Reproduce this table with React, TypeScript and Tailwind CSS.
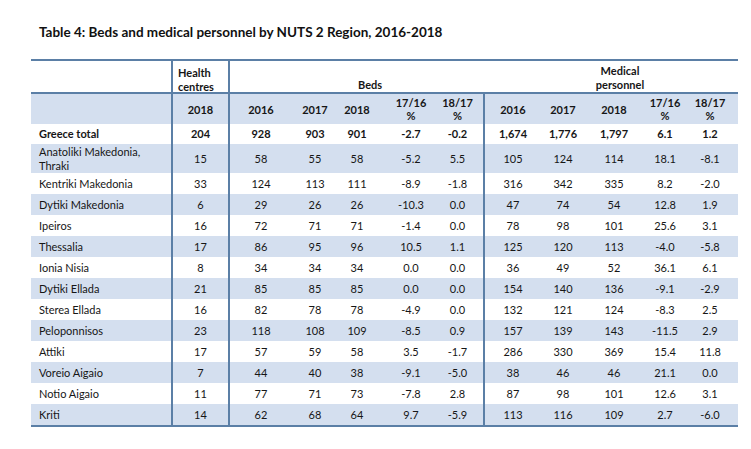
import React from "react";

const GRID =
  "grid grid-cols-[140px_57px_64px_46px_38px_70px_37px_58px_44px_58px_44px_51px]";

type Row = { name: string[]; v: string[]; bold?: boolean; h: string };

const rows: Row[] = [
  { name: ["Greece total"], v: ["204", "928", "903", "901", "-2.7", "-0.2", "1,674", "1,776", "1,797", "6.1", "1.2"], bold: true, h: "h-[20px]" },
  { name: ["Anatoliki Makedonia,", "Thraki"], v: ["15", "58", "55", "58", "-5.2", "5.5", "105", "124", "114", "18.1", "-8.1"], h: "h-[29px]" },
  { name: ["Kentriki Makedonia"], v: ["33", "124", "113", "111", "-8.9", "-1.8", "316", "342", "335", "8.2", "-2.0"], h: "h-[21px]" },
  { name: ["Dytiki Makedonia"], v: ["6", "29", "26", "26", "-10.3", "0.0", "47", "74", "54", "12.8", "1.9"], h: "h-[21px]" },
  { name: ["Ipeiros"], v: ["16", "72", "71", "71", "-1.4", "0.0", "78", "98", "101", "25.6", "3.1"], h: "h-[21px]" },
  { name: ["Thessalia"], v: ["17", "86", "95", "96", "10.5", "1.1", "125", "120", "113", "-4.0", "-5.8"], h: "h-[21px]" },
  { name: ["Ionia Nisia"], v: ["8", "34", "34", "34", "0.0", "0.0", "36", "49", "52", "36.1", "6.1"], h: "h-[21px]" },
  { name: ["Dytiki Ellada"], v: ["21", "85", "85", "85", "0.0", "0.0", "154", "140", "136", "-9.1", "-2.9"], h: "h-[21px]" },
  { name: ["Sterea Ellada"], v: ["16", "82", "78", "78", "-4.9", "0.0", "132", "121", "124", "-8.3", "2.5"], h: "h-[21px]" },
  { name: ["Peloponnisos"], v: ["23", "118", "108", "109", "-8.5", "0.9", "157", "139", "143", "-11.5", "2.9"], h: "h-[21px]" },
  { name: ["Attiki"], v: ["17", "57", "59", "58", "3.5", "-1.7", "286", "330", "369", "15.4", "11.8"], h: "h-[21px]" },
  { name: ["Voreio Aigaio"], v: ["7", "44", "40", "38", "-9.1", "-5.0", "38", "46", "46", "21.1", "0.0"], h: "h-[21px]" },
  { name: ["Notio Aigaio"], v: ["11", "77", "71", "73", "-7.8", "2.8", "87", "98", "101", "12.6", "3.1"], h: "h-[21px]" },
  { name: ["Kriti"], v: ["14", "62", "68", "64", "9.7", "-5.9", "113", "116", "109", "2.7", "-6.0"], h: "h-[21px]" },
];

// per value column extra classes (index 0 = health centres)
const colCls = [
  "border-l-2 border-[#5b7fa6]",
  "border-l-2 border-[#5b7fa6]",
  "",
  "",
  "",
  "pr-[14px]",
  "border-l-2 border-[#5b7fa6]",
  "",
  "",
  "",
  "pr-[5px]",
];

export default function App() {
  return (
    <div
      className="w-[751px] h-[449px] bg-white text-[#161616] overflow-hidden"
      style={{ fontFamily: "Lato, 'Noto Sans', sans-serif" }}
    >
      <div className="pt-[24px] pl-[39px] h-[59px] text-[13.5px] font-bold leading-[16px] text-[#111]">
        Table 4: Beds and medical personnel by NUTS 2 Region, 2016-2018
      </div>
      <div className="ml-[31px] w-[707px] border-t-2 border-b-2 border-[#5b7fa6] text-[11px]">
        {/* header row 1 */}
        <div className={`${GRID} h-[33px] border-b-2 border-[#5b7fa6] font-bold leading-[14px]`}>
          <div />
          <div className="border-l-2 border-[#5b7fa6] pl-[5px] pt-[5px]">
            <div>Health</div>
            <div>centres</div>
          </div>
          <div className="col-span-5 border-l-2 border-[#5b7fa6] flex items-end pl-[128px] pb-[2px]">
            Beds
          </div>
          <div className="col-span-5 flex items-end pb-[2px]">
            <div className="ml-[97px] w-[80px] text-center">
              <div>Medical</div>
              <div>personnel</div>
            </div>
          </div>
        </div>
        {/* header row 2 */}
        <div className={`${GRID} h-[30px] bg-[#d4dfef] font-bold leading-[13px]`}>
          <div />
          {["2018", "2016", "2017", "2018", "17/16|%", "18/17|%", "2016", "2017", "2018", "17/16|%", "18/17|%"].map(
            (t, i) => (
              <div key={i} className={`${colCls[i]} flex flex-col items-center justify-center`}>
                {t.split("|").map((p, j) => (
                  <div key={j}>{p}</div>
                ))}
              </div>
            )
          )}
        </div>
        {rows.map((r, ri) => (
          <div
            key={ri}
            className={`${GRID} ${r.h} ${ri % 2 === 1 ? "bg-[#d4dfef]" : "bg-white"} ${r.bold ? "font-bold" : ""} leading-[14px]`}
          >
            <div className="pl-[8px] flex flex-col justify-center">
              {r.name.map((n, j) => (
                <div key={j}>{n}</div>
              ))}
            </div>
            {r.v.map((v, i) => (
              <div key={i} className={`${colCls[i]} flex items-center justify-center`}>
                {v}
              </div>
            ))}
          </div>
        ))}
      </div>
    </div>
  );
}
